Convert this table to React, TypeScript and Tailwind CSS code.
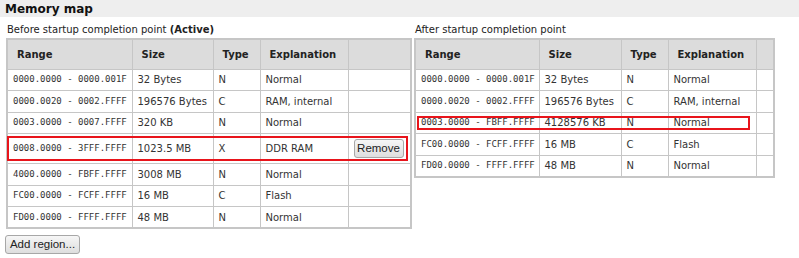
import type { ReactNode } from 'react';

type Region = { range: string; size: string; type: string; note: string; removable?: boolean };

const BEFORE: Region[] = [
  { range: '0000.0000 - 0000.001F', size: '32 Bytes', type: 'N', note: 'Normal' },
  { range: '0000.0020 - 0002.FFFF', size: '196576 Bytes', type: 'C', note: 'RAM, internal' },
  { range: '0003.0000 - 0007.FFFF', size: '320 KB', type: 'N', note: 'Normal' },
  { range: '0008.0000 - 3FFF.FFFF', size: '1023.5 MB', type: 'X', note: 'DDR RAM', removable: true },
  { range: '4000.0000 - FBFF.FFFF', size: '3008 MB', type: 'N', note: 'Normal' },
  { range: 'FC00.0000 - FCFF.FFFF', size: '16 MB', type: 'C', note: 'Flash' },
  { range: 'FD00.0000 - FFFF.FFFF', size: '48 MB', type: 'N', note: 'Normal' },
];

const AFTER: Region[] = [
  { range: '0000.0000 - 0000.001F', size: '32 Bytes', type: 'N', note: 'Normal' },
  { range: '0000.0020 - 0002.FFFF', size: '196576 Bytes', type: 'C', note: 'RAM, internal' },
  { range: '0003.0000 - FBFF.FFFF', size: '4128576 KB', type: 'N', note: 'Normal' },
  { range: 'FC00.0000 - FCFF.FFFF', size: '16 MB', type: 'C', note: 'Flash' },
  { range: 'FD00.0000 - FFFF.FFFF', size: '48 MB', type: 'N', note: 'Normal' },
];

const btn =
  "rounded-[3px] border border-[#a7a7a7] bg-gradient-to-b from-[#f6f6f6] to-[#dedede] text-[11.5px] text-[#222] [font-family:'Liberation_Sans',Arial,sans-serif] leading-none";

function Th({ children }: { children?: ReactNode }) {
  return (
    <th className="h-[30px] whitespace-nowrap border border-[#c6c6c6] bg-[#dcdcdc] px-[9px] text-left font-bold leading-[13px] text-[#222]">
      {children}
    </th>
  );
}

function Td({ children, mono }: { children?: ReactNode; mono?: boolean }) {
  return (
    <td
      className={
        mono
          ? "whitespace-nowrap border border-[#c6c6c6] pl-[5px] pr-0 text-[9px] leading-[13px] text-[#333] [font-family:'DejaVu_Sans_Mono',monospace]"
          : 'whitespace-nowrap border border-[#c6c6c6] pl-[5px] pr-0 leading-[13px] text-[#333]'
      }
    >
      {children}
    </td>
  );
}

function MapTable({ rows, widths, tableWidth }: { rows: Region[]; widths: number[]; tableWidth: number }) {
  return (
    <table className="table-fixed border-collapse border-2 border-[#c6c6c6]" style={{ width: tableWidth }}>
      <colgroup>
        {widths.map((w, i) => (
          <col key={i} style={{ width: w }} />
        ))}
      </colgroup>
      <thead>
        <tr>
          <Th>Range</Th>
          <Th>Size</Th>
          <Th>Type</Th>
          <Th>Explanation</Th>
          <Th />
        </tr>
      </thead>
      <tbody>
        {rows.map(r => (
          <tr key={r.range} className={r.removable ? 'h-[30px]' : 'h-[21.5px]'}>
            <Td mono>{r.range}</Td>
            <Td>{r.size}</Td>
            <Td>{r.type}</Td>
            <Td>{r.note}</Td>
            <td className="border border-[#c6c6c6] px-[5px]">
              {r.removable && <button className={`${btn} h-[19px] w-[50px]`}>Remove</button>}
            </td>
          </tr>
        ))}
      </tbody>
    </table>
  );
}

export default function App() {
  return (
    <div className="h-[258px] w-[799px] bg-white text-[10px] text-[#222] [font-family:'DejaVu_Sans',Verdana,sans-serif]">
      <div className="h-[17px] bg-[#eeeeee] pl-[5px] pt-[1px] text-[12px] font-bold leading-[16px] text-[#111]">
        Memory map
      </div>

      <div className="flex gap-[2px] pl-[6px]">
        {/* before startup completion */}
        <div className="flex flex-col">
          <div className="h-[21px] pl-[1px] pt-[6px] leading-[13px]">
            Before startup completion point <b>(Active)</b>
          </div>
          <div className="relative">
            <MapTable rows={BEFORE} widths={[125, 81, 47, 88, 63]} tableWidth={404} />
            <div className="pointer-events-none absolute left-[1px] top-[98px] h-[25px] w-[401px] border-2 border-[#e8141b]" />
          </div>
          <div className="pt-[6px]">
            <button className={`${btn} -ml-[1px] h-[19px] w-[75px]`}>Add region...</button>
          </div>
        </div>

        {/* after startup completion */}
        <div className="flex flex-col">
          <div className="h-[21px] pl-[1px] pt-[6px] leading-[13px]">After startup completion point</div>
          <div className="relative">
            <MapTable rows={AFTER} widths={[124, 82, 47, 88, 18]} tableWidth={359} />
            <div className="pointer-events-none absolute left-[3px] top-[78px] h-[14px] w-[333px] border-2 border-[#e8141b]" />
          </div>
        </div>
      </div>
    </div>
  );
}
